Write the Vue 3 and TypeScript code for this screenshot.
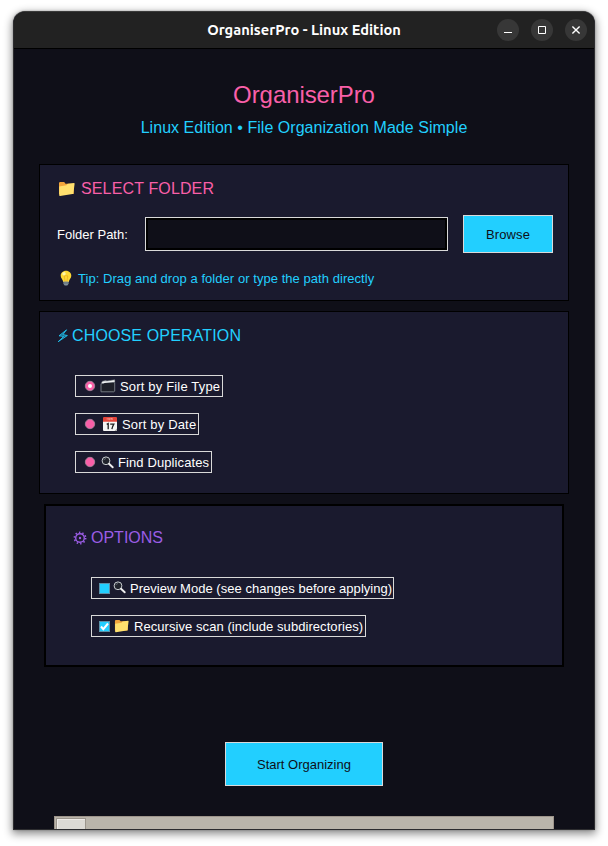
<script setup lang="ts">
import { ref } from 'vue'

interface Operation {
  id: string
  label: string
  icon: 'dividers' | 'calendar' | 'search'
}

const operations: Operation[] = [
  { id: 'type', label: 'Sort by File Type', icon: 'dividers' },
  { id: 'date', label: 'Sort by Date', icon: 'calendar' },
  { id: 'duplicates', label: 'Find Duplicates', icon: 'search' },
]

const selected = ref('type')
const folderPath = ref('')
const preview = ref(false)
const recursive = ref(true)
</script>

<template>
  <div class="desktop">
    <div class="window">
      <header class="titlebar">
        <span class="caption">OrganiserPro - Linux Edition</span>
        <div class="controls">
          <button class="control" aria-label="Minimize">
            <svg width="22" height="22" viewBox="0 0 22 22"><path d="M7 13.5h8" stroke="#fff" /></svg>
          </button>
          <button class="control" aria-label="Maximize">
            <svg width="22" height="22" viewBox="0 0 22 22"><path d="M7.5 7.5h7v7h-7z" fill="none" stroke="#fff" /></svg>
          </button>
          <button class="control" aria-label="Close">
            <svg width="22" height="22" viewBox="0 0 22 22"><path d="M7.4 7.4l7.2 7.2M14.6 7.4l-7.2 7.2" stroke="#fff" stroke-width="1.4" /></svg>
          </button>
        </div>
      </header>

      <main class="content">
        <h1 class="title">OrganiserPro</h1>
        <p class="subtitle">Linux Edition • File Organization Made Simple</p>

        <section class="card folder-card">
          <h2 class="heading pink">
            <svg class="folder-icon" width="18" height="16" viewBox="0 0 18 16">
              <path d="M1 2.2Q1 1 2.2 1h4l1.3 1.7h7.2q1 0 1 1V13H1z" fill="#f2a53c" />
              <path d="M1.200 5.400L8.500 4.300l1.200-1.500 6.300-.9q.7 0 .6.800l-1.200 9.500q-.1.800-.9.900L2 15q-.8 0-.8-.8z" fill="#ffe06e" />
            </svg>
            <span>SELECT FOLDER</span>
          </h2>
          <div class="path-row">
            <label class="path-label" for="path">Folder Path:</label>
            <input id="path" v-model="folderPath" class="path-input" type="text" />
            <button class="button browse">Browse</button>
          </div>
          <p class="tip">
            <svg width="14" height="16" viewBox="0 0 14 16">
              <path d="M7 .7C3.800.7 1.700 3 1.700 5.800c0 2.500 2.200 3.500 2.500 6.200h5.600c.3-2.700 2.500-3.700 2.500-6.200C12.300 3 10.200.7 7 .7z" fill="#fdd835" />
              <path d="M5.200 6l1 6M8.800 6l-1 6M5 6.200l1.300-.8.7.8.7-.8 1.300.8" fill="none" stroke="#e9a21b" stroke-width=".6" />
              <ellipse cx="5" cy="3.700" rx="1.700" ry="1.800" fill="#fff7a8" />
              <path d="M4.400 11.500h5.200v2.300L8.300 15.500H5.700L4.400 13.800z" fill="#82919b" />
              <path d="M4.400 13h5.200" stroke="#4d5c66" stroke-width=".7" />
            </svg>
            <span>Tip: Drag and drop a folder or type the path directly</span>
          </p>
        </section>

        <section class="card operation-card">
          <h2 class="heading cyan">
            <svg class="bolt-icon" width="12" height="14" viewBox="0 0 12 14">
              <path d="M9.600.8L2 6.800l4.600.7-5.400 5.200L10.400 6.500l-4.500-.9z" fill="#22cfff" fill-opacity=".45" stroke="#22cfff" stroke-width=".8" />
            </svg>
            <span>CHOOSE OPERATION</span>
          </h2>
          <div class="choices">
            <label v-for="op in operations" :key="op.id" class="choice" :class="op.icon">
              <input v-model="selected" class="native" type="radio" name="operation" :value="op.id" />
              <svg class="radio" width="12" height="12" viewBox="0 0 12 12">
                <circle cx="6" cy="6" r="4.700" fill="#f95fa8" stroke="#a8829a" stroke-width=".9" />
                <circle v-if="selected === op.id" cx="6" cy="6" r="2" fill="#fff" />
              </svg>
              <svg v-if="op.icon === 'dividers'" class="glyph" width="16" height="14" viewBox="0 0 16 14">
                <path d="M1.200 4.200L2.500 2.200l3.500-.6.800.5 7.900-1.300v2" fill="#d9dddd" stroke="#747a7c" stroke-width=".6" />
                <path d="M1 4.800l3.200-.6.600-.9h9.900v8.900l-.8.600H1z" fill="#1e2028" stroke="#7b8187" stroke-width=".9" />
                <path d="M2.300 3.700l12.300-1.500" stroke="#f0f2f2" stroke-width="1.200" />
              </svg>
              <svg v-else-if="op.icon === 'calendar'" class="glyph" width="14" height="14" viewBox="0 0 14 14">
                <path d="M0 1Q0 0 1 0h12q1 0 1 1v4H0z" fill="#e5443a" />
                <path d="M0 4.700h14V13q0 1-1 1H1q-1 0-1-1z" fill="#f5f5f5" />
                <path d="M4.200 1v1.700M5.700 1v1.700h1V1M8 2.800V1l1.200 1.700V1" fill="none" stroke="#f6b5ad" stroke-width=".6" />
                <path d="M3.700 7.400l1.500-.8v5.600M7.200 7.100h3.600q-1.500 2.500-1.900 5.100" fill="none" stroke="#222" stroke-width="1.300" />
                <path d="M11.500 14L14 11.500V13q0 1-1 1z" fill="#aaa" />
              </svg>
              <svg v-else class="glyph" width="13" height="13" viewBox="0 0 13 13">
                <circle cx="5" cy="4.800" r="3.900" fill="#20232c" stroke="#c8cdd0" stroke-width="1" />
                <path d="M2.800 4.200Q3.200 2.600 5 2.500" fill="none" stroke="#75808a" stroke-width=".7" />
                <path d="M8 7.800l3.700 3.500" stroke="#eee" stroke-width="1.900" stroke-linecap="round" />
              </svg>
              <span>{{ op.label }}</span>
            </label>
          </div>
        </section>

        <section class="card options-card">
          <h2 class="heading purple">
            <svg class="gear-icon" width="14" height="14" viewBox="0 0 14 14">
              <g fill="none" stroke="#9b5de5">
                <circle cx="7" cy="7" r="4.300" stroke-width="1.400" />
                <circle cx="7" cy="7" r="5.600" stroke-width="1.700" stroke-dasharray="1.400 2.118" />
              </g>
              <circle cx="7" cy="7" r="1.200" fill="#9b5de5" />
            </svg>
            <span>OPTIONS</span>
          </h2>
          <div class="choices">
            <label class="choice check preview">
              <input v-model="preview" class="native" type="checkbox" />
              <span class="box"><svg v-if="preview" width="9" height="9" viewBox="0 0 9 9"><path d="M1 4.500l2.300 2.700L8 1.500" fill="none" stroke="#fff" stroke-width="2" /></svg></span>
              <svg class="glyph" width="13" height="13" viewBox="0 0 13 13">
                <circle cx="5" cy="4.800" r="3.900" fill="#20232c" stroke="#c8cdd0" stroke-width="1" />
                <path d="M2.800 4.200Q3.200 2.600 5 2.500" fill="none" stroke="#75808a" stroke-width=".7" />
                <path d="M8 7.800l3.700 3.500" stroke="#eee" stroke-width="1.900" stroke-linecap="round" />
              </svg>
              <span>Preview Mode (see changes before applying)</span>
            </label>
            <label class="choice check recursive">
              <input v-model="recursive" class="native" type="checkbox" />
              <span class="box"><svg v-if="recursive" width="9" height="9" viewBox="0 0 9 9"><path d="M1 4.500l2.300 2.700L8 1.500" fill="none" stroke="#fff" stroke-width="2" /></svg></span>
              <svg class="glyph" width="15" height="14" viewBox="0 0 17 16">
                <path d="M1 2.200Q1 1 2.200 1h4l1.300 1.700h7.200q1 0 1 1V13H1z" fill="#f2a53c" />
                <path d="M1.200 5.400L8.500 4.300l1.200-1.500 6.300-.9q.7 0 .6.800l-1.200 9.500q-.1.800-.9.900L2 15q-.8 0-.8-.8z" fill="#ffe06e" />
              </svg>
              <span>Recursive scan (include subdirectories)</span>
            </label>
          </div>
        </section>

        <button class="button start">Start Organizing</button>

        <div class="progress"><div class="thumb"></div></div>
      </main>
    </div>
  </div>
</template>

<style>
body {
  background: #fff;
}
</style>

<style scoped>
* {
  box-sizing: border-box;
}

.desktop {
  width: 608px;
  height: 846px;
  padding: 11px 13px 16px;
  overflow: hidden;
  background: #fff;
  font-family: "Liberation Sans", Arial, sans-serif;
  font-size: 13px;
  color: #fff;
}

.window {
  display: flex;
  flex-direction: column;
  width: 582px;
  height: 819px;
  overflow: hidden;
  border: 1px solid #2c2c2f;
  border-top-color: #3a3a3a;
  border-radius: 12px 12px 0 0;
  background: #0f0f18;
  box-shadow: 0 3px 8px 1px rgba(0, 0, 0, 0.45), 0 0 2px rgba(0, 0, 0, 0.3);
}

.titlebar {
  display: grid;
  grid-template-columns: 1fr auto 1fr;
  align-items: center;
  flex: none;
  height: 37px;
  padding-right: 7px;
  border-bottom: 1px solid #000;
  background: #222;
}

.caption {
  grid-column: 2;
  padding-left: 7px;
  font: 600 14.67px/20px Ubuntu, "Noto Sans", sans-serif;
  white-space: nowrap;
}

.controls {
  display: flex;
  justify-content: flex-end;
  gap: 12px;
}

.control {
  width: 22px;
  height: 22px;
  padding: 0;
  border: 0;
  border-radius: 50%;
  background: #373737;
}

.control svg {
  display: block;
}

.content {
  display: flex;
  flex-direction: column;
  align-items: center;
  flex: 1;
  min-height: 0;
  overflow: hidden;
}

.title {
  margin: 32px 0 0;
  font-size: 24px;
  font-weight: 400;
  line-height: 28px;
  letter-spacing: -0.08px;
  color: #f95fa8;
}

.subtitle {
  margin: 9px 0 0;
  font-size: 16px;
  line-height: 20px;
  letter-spacing: 0.04px;
  color: #22cfff;
}

.card {
  flex: none;
  width: 530px;
  border: 1px solid #000;
  background: #1a1a2e;
}

.folder-card {
  height: 137px;
  margin-top: 26px;
  padding: 14px 15px 0 17px;
}

.operation-card {
  height: 183px;
  margin-top: 10px;
  padding: 14px 17px 0;
}

.options-card {
  width: 520px;
  height: 163px;
  margin-top: 10px;
  padding: 22px 27px 0;
  border-width: 2px;
}

.heading {
  display: flex;
  align-items: center;
  height: 20px;
  margin: 0;
  font-size: 16px;
  font-weight: 400;
  line-height: 20px;
  letter-spacing: 0.14px;
}

.folder-icon {
  margin: 0 5px 0 1px;
}

.bolt-icon {
  margin-right: 3px;
}

.gear-icon {
  margin: 0 4px 1px 0;
}

.pink {
  color: #f95fa8;
}

.cyan {
  color: #22cfff;
}

.purple {
  color: #9b5de5;
  letter-spacing: 0;
}

.path-row {
  display: flex;
  align-items: center;
  height: 38px;
  margin-top: 16px;
}

.path-label {
  width: 88px;
}

.path-input {
  width: 303px;
  height: 34px;
  margin: 0 15px 0 0;
  padding: 0 6px;
  border: 1px solid #d9d9d9;
  border-radius: 0;
  outline: none;
  background: #0f0f18;
  box-shadow: inset 0 0 0 2px #000;
  color: #fff;
  font: inherit;
}

.button {
  padding: 0;
  border: 1px solid #d9d9d9;
  border-radius: 0;
  background: #22cfff;
  color: #0f0f18;
  font: inherit;
}

.browse {
  width: 90px;
  height: 38px;
  letter-spacing: 0.1px;
}

.tip {
  display: flex;
  align-items: center;
  gap: 5px;
  height: 18px;
  margin: 16px 0 0 2px;
  letter-spacing: 0.05px;
  color: #22cfff;
}

.choices {
  display: flex;
  flex-direction: column;
  align-items: flex-start;
  gap: 16px;
  padding-left: 18px;
  margin-top: 29px;
}

.choice {
  display: flex;
  align-items: center;
  height: 22px;
  width: 148px;
  padding-left: 8px;
  border: 1px solid #d9d9d9;
  letter-spacing: 0.17px;
  white-space: nowrap;
}

.choice > * {
  flex: none;
}

.choice.calendar {
  width: 124px;
}

.choice.search {
  width: 137px;
  letter-spacing: 0.1px;
}

.native {
  position: absolute;
  opacity: 0;
  pointer-events: none;
}

.radio {
  margin-right: 4px;
}

.dividers .glyph {
  margin-right: 4px;
}

.calendar .glyph {
  margin: 0 5px 0 3px;
}

.search .glyph {
  margin: 0 4px 0 1px;
}

.check {
  padding-left: 7px;
}

.choice.preview {
  width: 303px;
  letter-spacing: 0.03px;
}

.choice.recursive {
  width: 275px;
  letter-spacing: 0.06px;
}

.box {
  display: flex;
  align-items: center;
  justify-content: center;
  width: 11px;
  height: 11px;
  margin-top: 1px;
  border: 1px solid #5b91a8;
  background: #22cfff;
}

.preview .glyph {
  margin: 0 4px 1px 3px;
}

.recursive .glyph {
  margin: 0 5px 0 4px;
}

.start {
  flex: none;
  width: 158px;
  height: 44px;
  margin-top: 75px;
}

.progress {
  flex: none;
  width: 500px;
  height: 20px;
  margin-top: 30px;
  padding: 1px;
  border: 1px solid #9e958b;
  background: #bab5ab;
}

.thumb {
  width: 30px;
  height: 18px;
  border: 1px solid #9b958c;
  background: #dcdad5;
  box-shadow: inset 1px 1px #eeebe7;
}
</style>
